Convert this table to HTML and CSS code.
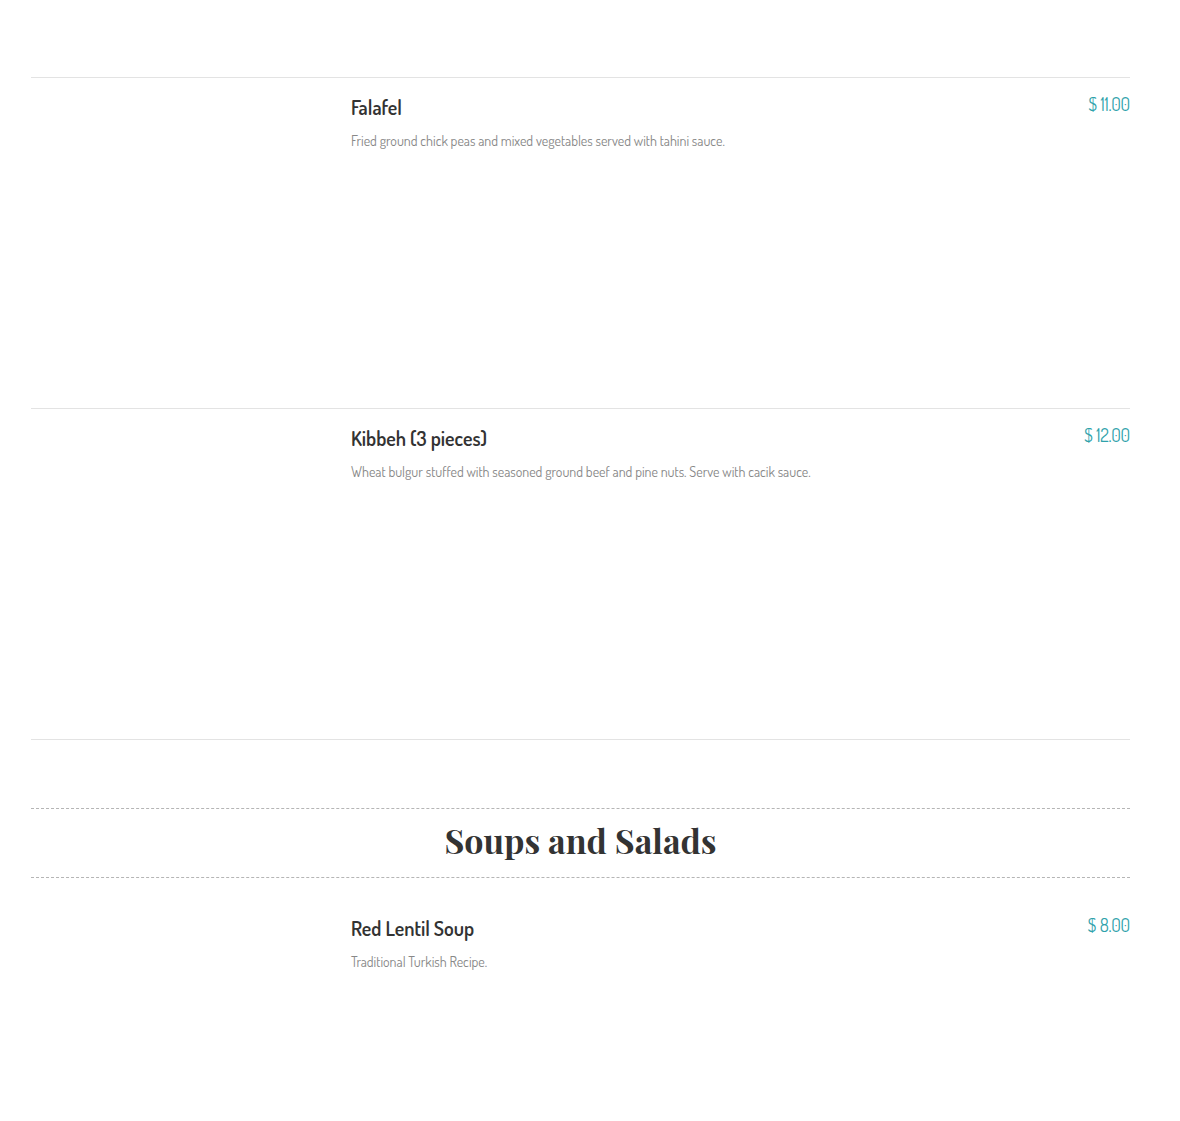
FILE: index.html
```html
<!DOCTYPE html>
<html>
<head>
<meta charset="utf-8">
<link rel="stylesheet" href="styles.css">
</head>
<body>
<div class="menu">
  <div class="list">
    <div class="item">
      <div class="thumb"></div>
      <div class="info">
        <div class="head">
          <h3 class="name">Falafel</h3>
          <span class="price">$ 11.00</span>
        </div>
        <p class="desc">Fried ground chick peas and mixed vegetables served with tahini sauce.</p>
      </div>
    </div>
    <div class="item">
      <div class="thumb"></div>
      <div class="info">
        <div class="head">
          <h3 class="name">Kibbeh (3 pieces)</h3>
          <span class="price">$ 12.00</span>
        </div>
        <p class="desc">Wheat bulgur stuffed with seasoned ground beef and pine nuts. Serve with cacik sauce.</p>
      </div>
    </div>
  </div>

  <h2 class="section-title">Soups and Salads</h2>

  <div class="list list-plain">
    <div class="item">
      <div class="thumb"></div>
      <div class="info">
        <div class="head">
          <h3 class="name">Red Lentil Soup</h3>
          <span class="price">$ 8.00</span>
        </div>
        <p class="desc">Traditional Turkish Recipe.</p>
      </div>
    </div>
  </div>
</div>
</body>
</html>
```
FILE: styles.css
```css
html, body {
  margin: 0;
  padding: 0;
  background: #fff;
}
body {
  font-family: "Dosis", "DejaVu Sans Condensed", sans-serif;
  color: #333;
}
.menu {
  width: 1099px;
  margin-left: 31px;
  padding-top: 77px;
}
.list {
  border-bottom: 1px solid #e3e3e3;
}
.list-plain {
  border-bottom: none;
}
.item {
  display: flex;
  border-top: 1px solid #e3e3e3;
  height: 331px;
  box-sizing: border-box;
  padding-top: 16px;
}
.list-plain .item {
  border-top: none;
  padding-top: 37px;
  height: 243px;
}
.thumb {
  width: 320px;
  flex: none;
}
.info {
  flex: 1;
}
.head {
  display: flex;
  justify-content: space-between;
  align-items: flex-start;
}
.name {
  margin: 0;
  font-size: 20px;
  line-height: 26px;
  font-weight: 600;
  color: #333;
}
.price {
  font-size: 18px;
  line-height: 20px;
  font-weight: 400;
  color: #2fa2ab;
  margin-top: 0;
  letter-spacing: -0.2px;
}
.desc {
  margin: 11px 0 0;
  font-size: 14px;
  line-height: 20px;
  color: #888;
}
.section-title {
  margin: 68px 0 0;
  border-top: 1px dashed #b5b5b5;
  border-bottom: 1px dashed #b5b5b5;
  box-sizing: border-box;
  height: 70px;
  padding-bottom: 6px;
  display: flex;
  align-items: center;
  justify-content: center;
  font-family: "Playfair Display", "Liberation Serif", serif;
  font-size: 34px;
  font-weight: 700;
  color: #333;
}
```
